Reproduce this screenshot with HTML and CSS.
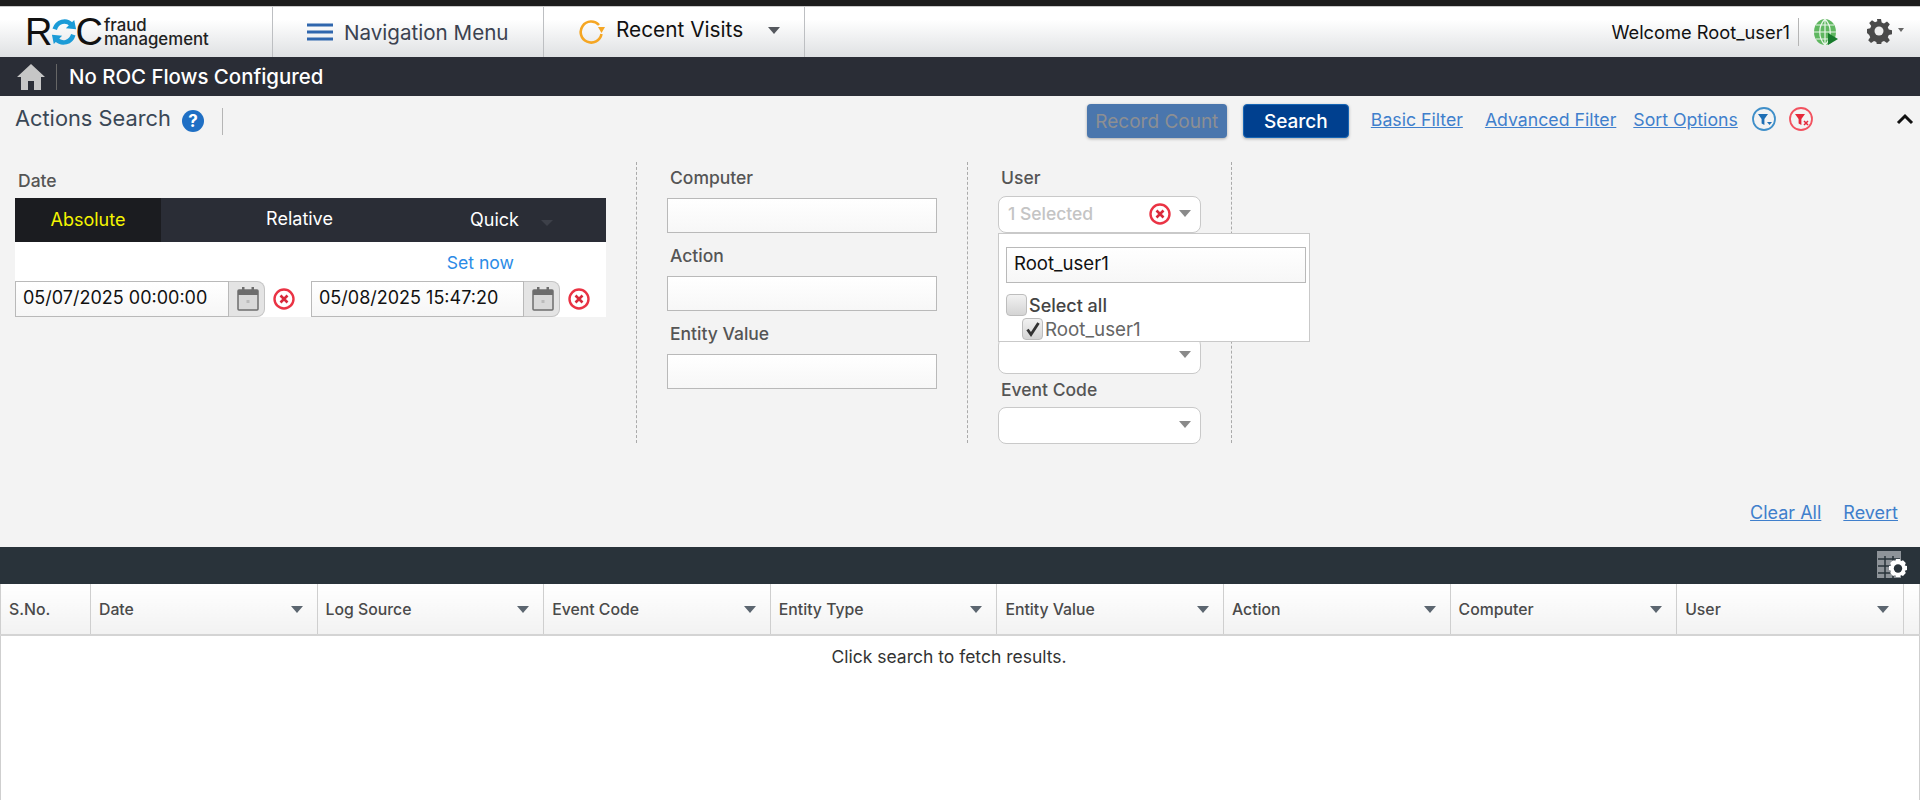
FILE: index.html
```html
<!doctype html>
<html>
<head>
<meta charset="utf-8">
<title>Actions Search</title>
<link rel="stylesheet" href="styles.css">
</head>
<body>
<svg class="defs" width="0" height="0">
  <symbol id="clear" viewBox="0 0 22 22">
    <circle cx="11" cy="11" r="9.500" fill="#fff" stroke="#ea3344" stroke-width="2.400"/>
    <path d="M7.500 7.500l7 7M14.500 7.500l-7 7" stroke="#d8283a" stroke-width="2.600" fill="none"/>
  </symbol>
  <symbol id="calendar" viewBox="0 0 22 24">
    <rect x="1" y="3" width="20" height="20" rx="1" fill="#d9d9d9" stroke="#6d6d6d" stroke-width="1.500"/>
    <rect x="1" y="3" width="20" height="5" fill="#6d6d6d"/>
    <rect x="5" y="0" width="2.500" height="6" fill="#6d6d6d"/>
    <rect x="14.500" y="0" width="2.500" height="6" fill="#6d6d6d"/>
    <rect x="9.500" y="13" width="3" height="3" fill="#bbb"/>
  </symbol>
</svg>

<div class="topline"></div>
<div class="header">
  <div class="head-cell logo-cell">
    <div class="logo">
      <span class="logo-big">R</span>
      <svg class="logo-o" width="26" height="30" viewBox="0 0 28 30">
        <path d="M4 12A11 12 0 0 1 22 7" fill="none" stroke="#1b9bd7" stroke-width="5"/>
        <path d="M24 18A11 12 0 0 1 6 23" fill="none" stroke="#1b9bd7" stroke-width="5"/>
        <path d="M16 11l11 1-2-10zM12 19l-11-1 2 10z" fill="#1b9bd7"/>
      </svg>
      <span class="logo-big">C</span>
      <span class="logo-small">fraud<br>management</span>
    </div>
  </div>
  <div class="head-cell nav-cell">
    <svg width="26" height="18" viewBox="0 0 26 18"><path d="M0 2h26M0 9h26M0 16h26" stroke="#2f66ad" stroke-width="3"/></svg>
    <span>Navigation Menu</span>
  </div>
  <div class="head-cell recent-cell">
    <svg width="26" height="26" viewBox="0 0 26 26">
      <path d="M20 6A10.500 10.500 0 1 0 22.500 15" fill="none" stroke="#f5a623" stroke-width="2.600"/>
      <path d="M19 8h7l-3.500 6z" fill="#f5a623"/>
    </svg>
    <span class="recent-text">Recent Visits</span>
    <i class="caret caret-dark"></i>
  </div>
  <div class="head-right">
    <span class="welcome">Welcome Root_user1</span>
    <svg class="globe" width="26" height="28" viewBox="0 0 26 28">
      <ellipse cx="12" cy="14" rx="11" ry="13" fill="#5fb760"/>
      <path d="M1 14h22M3 7h18M3 21h18M12 1v26M12 1C5 8 5 20 12 27M12 1c7 7 7 19 0 26" fill="none" stroke="#e9f5e9" stroke-width="1.200"/>
      <path d="M15 15l10 6-10 6z" fill="#177a2c"/>
    </svg>
    <svg class="gear" width="26" height="26" viewBox="0 0 26 26">
      <path d="M11 1h4l.7 3.500 2.300 1 3-2 2.800 2.800-2 3 1 2.300 3.200.7v4l-3.200.7-1 2.300 2 3-2.800 2.800-3-2-2.300 1-.7 2.900h-4l-.7-2.900-2.300-1-3 2-2.800-2.800 2-3-1-2.300L1 15v-4l3.200-.7 1-2.300-2-3L6 2.200l3 2 2.300-1z" fill="#4a4a4a"/>
      <circle cx="13" cy="13" r="4.500" fill="#eee"/>
    </svg>
    <i class="caret caret-tiny"></i>
  </div>
</div>

<div class="flowbar">
  <svg class="home" width="28" height="26" viewBox="0 0 28 26"><path d="M14 0L0 13h4v13h7v-9h6v9h7V13h4z" fill="#c6c6c6"/></svg>
  <span class="flow-text">No ROC Flows Configured</span>
</div>

<div class="search-panel">
  <div class="toolbar">
    <span class="page-title">Actions Search</span>
    <svg class="help" width="24" height="24" viewBox="0 0 24 24">
      <circle cx="12" cy="12" r="11" fill="#1f6fc4"/>
      <text x="12" y="18" text-anchor="middle" class="help-mark">?</text>
    </svg>
    <div class="title-sep"></div>
    <div class="tool-right">
      <button class="btn btn-count">Record Count</button>
      <button class="btn btn-search">Search</button>
      <a class="link link-basic">Basic Filter</a>
      <a class="link link-adv">Advanced Filter</a>
      <a class="link link-sort">Sort Options</a>
      <svg class="filter-a" width="26" height="26" viewBox="0 0 26 26">
        <circle cx="13" cy="13" r="11" fill="#f3f3f3" stroke="#3f8fc9" stroke-width="1.800"/>
        <path d="M7 8h10l-3.600 5v6l-2.800-1.500V13z" fill="#1f6fb5"/>
        <path d="M16 16h5l-2.500 3z" fill="#1f6fb5"/>
      </svg>
      <svg class="filter-b" width="26" height="26" viewBox="0 0 26 26">
        <circle cx="13" cy="13" r="11" fill="#f3f3f3" stroke="#f2525f" stroke-width="1.800"/>
        <path d="M7 8h10l-3.600 5v6l-2.800-1.500V13z" fill="#e5283a"/>
        <path d="M16 15l4 4M20 15l-4 4" stroke="#e5283a" stroke-width="1.500"/>
      </svg>
      <svg class="collapse" width="18" height="12" viewBox="0 0 18 12"><path d="M2 10l7-7 7 7" fill="none" stroke="#111" stroke-width="3"/></svg>
    </div>
  </div>

  <div class="filters">
    <div class="col-date">
      <div class="date-label">Date</div>
      <div class="date-box">
        <div class="date-tabs">
          <span class="tab tab-on">Absolute</span>
          <span class="tab tab-relative">Relative</span>
          <span class="tab tab-quick">Quick<i class="caret caret-muted"></i></span>
        </div>
        <div class="set-now">Set now</div>
        <div class="date-row">
          <div class="date-input date-from">05/07/2025 00:00:00</div>
          <div class="cal-btn"><svg width="22" height="24"><use href="#calendar"/></svg></div>
          <svg class="date-clear" width="22" height="22"><use href="#clear"/></svg>
          <div class="date-input date-to">05/08/2025 15:47:20</div>
          <div class="cal-btn"><svg width="22" height="24"><use href="#calendar"/></svg></div>
          <svg class="date-clear" width="22" height="22"><use href="#clear"/></svg>
        </div>
      </div>
    </div>

    <div class="col-mid">
      <div class="field"><label>Computer</label><div class="text-input"></div></div>
      <div class="field"><label>Action</label><div class="text-input"></div></div>
      <div class="field"><label>Entity Value</label><div class="text-input"></div></div>
    </div>

    <div class="col-user">
      <div class="sel-field">
        <label>User</label>
        <div class="select">
          <span class="sel-value">1 Selected</span>
          <svg class="sel-clear" width="22" height="22"><use href="#clear"/></svg>
          <i class="caret caret-grey"></i>
        </div>
      </div>
      <!-- next two rows sit under the open menu -->
      <div class="sel-field"><label></label><div class="select"><i class="caret caret-grey"></i></div></div>
      <div class="sel-field"><label></label><div class="select"><i class="caret caret-grey"></i></div></div>
      <div class="sel-field"><label>Event Code</label><div class="select"><i class="caret caret-grey"></i></div></div>

      <div class="user-menu">
        <div class="menu-search">Root_user1</div>
        <div class="menu-all"><span class="check"></span><span>Select all</span></div>
        <div class="menu-item">
          <span class="check">
            <svg width="16" height="16" viewBox="0 0 16 16"><path d="M2.500 8.500l3.500 5L13.500 2" fill="none" stroke="#333" stroke-width="2.800"/></svg>
          </span>
          <span>Root_user1</span>
        </div>
      </div>
    </div>
  </div>

  <div class="panel-foot">
    <a class="link">Clear All</a>
    <a class="link">Revert</a>
  </div>
</div>

<div class="grid-bar">
  <svg width="30" height="29" viewBox="0 0 30 29">
    <rect x="0" y="0" width="24" height="27" fill="#8e9499"/>
    <path d="M1 8h22M1 15h22M1 22h22M8 5v22M16 5v22" stroke="#29333a" stroke-width="1.500"/>
    <path d="M19 8h4l.7 2.300 2.300-1 2.800 2.800-1 2.300 2.200.7v4l-2.200.7 1 2.300-2.800 2.800-2.300-1-.7 2.100h-4l-.7-2.100-2.300 1-2.800-2.800 1-2.300-2.200-.7v-4l2.200-.7-1-2.300 2.800-2.800 2.300 1z" fill="#fff"/>
    <circle cx="21" cy="17.500" r="4.200" fill="#29333a"/>
  </svg>
</div>

<table class="grid">
  <colgroup>
    <col class="c-sno"><col class="c-a"><col class="c-a"><col class="c-a"><col class="c-a"><col class="c-a"><col class="c-a"><col class="c-a"><col class="c-a"><col>
  </colgroup>
  <thead>
    <tr>
      <th>S.No.</th>
      <th><div class="th-in">Date<i class="caret caret-head"></i></div></th>
      <th><div class="th-in">Log Source<i class="caret caret-head"></i></div></th>
      <th><div class="th-in">Event Code<i class="caret caret-head"></i></div></th>
      <th><div class="th-in">Entity Type<i class="caret caret-head"></i></div></th>
      <th><div class="th-in">Entity Value<i class="caret caret-head"></i></div></th>
      <th><div class="th-in">Action<i class="caret caret-head"></i></div></th>
      <th><div class="th-in">Computer<i class="caret caret-head"></i></div></th>
      <th><div class="th-in">User<i class="caret caret-head"></i></div></th>
      <th></th>
    </tr>
  </thead>
  <tbody>
    <tr><td colspan="10" class="empty">Click search to fetch results.</td></tr>
  </tbody>
</table>
</body>
</html>
```
FILE: styles.css
```css
html {
	overflow: hidden;
}
body {
	margin: 0;
	height: 800px;
	overflow: hidden;
	background: #fff;
	font-family: Inter, "Liberation Sans", sans-serif;
	font-size: 18px;
	color: #333;
}
.defs {
	position: absolute;
}
.topline {
	height: 6px;
	background: #1c1c1c;
	border-bottom: 1px solid #c9c9c9;
}

/* header */
.header {
	display: flex;
	height: 50px;
	background: linear-gradient(#fff, #fff 25%, #dfe1e3);
}
.head-cell {
	display: flex;
	align-items: center;
	box-sizing: border-box;
	border-right: 1px solid #bdbfc2;
}
.logo-cell {
	width: 273px;
	padding-left: 25px;
}
.logo {
	display: flex;
	align-items: center;
	height: 30px;
	color: #111;
}
.logo-big {
	font-family: "Liberation Sans Narrow", "Liberation Sans", sans-serif;
	font-size: 38px;
	line-height: 30px;
}
.logo-o {
	margin: 0 -2px 0 -1px;
}
.logo-small {
	margin-left: 1px;
	font-size: 16.800px;
	font-weight: 500;
	line-height: 14px;
	color: #222;
}
.nav-cell {
	width: 271px;
	padding-left: 34px;
	font-size: 20.600px;
	color: #3b4250;
}
.nav-cell span {
	margin-left: 11px;
}
.recent-cell {
	width: 261px;
	padding-left: 35px;
	font-size: 20.800px;
	color: #111;
}
.recent-text {
	margin: -5px 0 0 11px;
}
.head-right {
	flex: 1;
	display: flex;
	align-items: center;
	justify-content: flex-end;
}
.welcome {
	font-size: 18.300px;
	color: #111;
	padding-right: 8px;
	border-right: 1px solid #b5b5b5;
	line-height: 28px;
}
.globe {
	margin-left: 14px;
}
.gear {
	margin: -3px 0 0 27px;
}
.caret {
	display: inline-block;
	width: 0;
	height: 0;
	border-left: 6px solid transparent;
	border-right: 6px solid transparent;
	border-top: 7px solid #666;
}
.caret-dark {
	margin: -3px 0 0 25px;
	border-top-color: #55585e;
}
.caret-tiny {
	margin: -4px 16px 0 6px;
	border-width: 4px 3px 0;
	border-top-color: #666;
}
.flowbar {
	display: flex;
	align-items: center;
	height: 39px;
	background: #2a2d36;
}
.home {
	margin-left: 17px;
	padding-right: 11px;
	border-right: 1px solid #666;
}
.flow-text {
	margin-left: 12px;
	font-size: 20.400px;
	font-weight: 500;
	color: #fff;
}

/* filter panel */
.search-panel {
	height: 451px;
	background: #f3f3f3;
}
.toolbar {
	display: flex;
	align-items: center;
	height: 52px;
}
.page-title {
	margin: -8px 0 0 15px;
	font-size: 21.800px;
	color: #3a4756;
}
.help {
	margin: -2px 0 0 10px;
}
.help-mark {
	fill: #fff;
	font-size: 17px;
	font-weight: 700;
}
.title-sep {
	width: 1px;
	height: 27px;
	margin: -2px 0 0 17px;
	background: #b5b5b5;
}
.tool-right {
	flex: 1;
	display: flex;
	align-items: center;
	margin-top: -2px;
	padding-left: 864px;
}
.btn {
	height: 34px;
	padding: 0;
	border: 1px solid transparent;
	border-radius: 4px;
	font: inherit;
	font-size: 19px;
	box-shadow: 0 1px 3px #aaa;
}
.btn-count {
	width: 140px;
	background: #4a76ad;
	color: #8d8f93;
}
.btn-search {
	width: 106px;
	margin-left: 16px;
	background: #00408f;
	border-color: #1766b5;
	color: #fff;
	font-weight: 500;
}
.link {
	color: #3f7fcc;
	font-size: 17.700px;
	text-decoration: underline;
}
.tool-right .link, .tool-right svg {
	position: relative;
	top: -2px;
}
.link-basic {
	margin-left: 22px;
}
.link-adv {
	margin-left: 22px;
}
.link-sort {
	margin-left: 17px;
}
.filter-a {
	margin-left: 13px;
}
.filter-b {
	margin-left: 11px;
}
.collapse {
	margin-left: 82px;
}
.filters {
	display: flex;
	height: 281px;
	margin-top: 14px;
}
.col-date {
	width: 591px;
	margin: 0 30px 0 15px;
}
.date-label {
	height: 36px;
	font-size: 17.500px;
	font-weight: 500;
	line-height: 37px;
	padding-left: 3px;
	color: #555;
}
.date-box {
	background: #fff;
}
.date-tabs {
	display: flex;
	height: 44px;
	background: #2a2d36;
	color: #fff;
	line-height: 41px;
}
.tab {
	text-align: center;
}
.tab-on {
	width: 146px;
	background: #1b1c20;
	color: #f4f400;
	line-height: 43px;
}
.tab-relative {
	width: 277px;
}
.tab-quick {
	line-height: 43px;
	padding-left: 32px;
}
.caret-muted {
	margin-left: 22px;
	border-top-color: #3d4049;
	border-width: 6px 6px 0;
}
.set-now {
	height: 39px;
	padding-right: 92px;
	text-align: right;
	line-height: 41px;
	font-size: 17.600px;
	color: #2b8be6;
}
.date-row {
	display: flex;
	align-items: center;
	height: 36px;
}
.date-input {
	box-sizing: border-box;
	height: 36px;
	padding-left: 7px;
	background: linear-gradient(#fff, #f6f6f6);
	border: 1px solid #b9b9b9;
	color: #111;
	line-height: 32px;
}
.date-from {
	width: 214px;
}
.date-to {
	width: 213px;
	margin-left: 16px;
}
.cal-btn {
	display: flex;
	align-items: center;
	justify-content: center;
	box-sizing: border-box;
	width: 36px;
	height: 36px;
	padding-left: 3px;
	background: #e4e4e4;
	border: 1px solid #c4c4c4;
	border-left: 0;
	border-radius: 0 8px 8px 0;
}
.date-clear {
	margin-left: 8px;
}
.col-mid {
	box-sizing: border-box;
	width: 331px;
	padding-left: 30px;
	border-left: 1px dashed #aaa;
}
.field {
	margin-bottom: 7px;
}
.field label, .sel-field label {
	display: block;
	padding-left: 3px;
	font-size: 17.500px;
	font-weight: 500;
	color: #555;
	line-height: 31px;
}
.field label {
	height: 36px;
}
.text-input {
	box-sizing: border-box;
	width: 270px;
	height: 35px;
	background: linear-gradient(#fff, #f7f7f7);
	border: 1px solid #b9b9b9;
}
.col-user {
	position: relative;
	box-sizing: border-box;
	width: 265px;
	padding-left: 30px;
	border-left: 1px dashed #aaa;
	border-right: 1px dashed #aaa;
}
.sel-field label {
	height: 33.500px;
}
.select {
	display: flex;
	align-items: center;
	box-sizing: border-box;
	width: 203px;
	height: 37px;
	padding: 0 9px;
	background: #fff;
	border: 1px solid #c9c9c9;
	border-radius: 8px;
}
.select .caret {
	margin: -2px 0 0 auto;
	border-top-color: #8a8a8a;
}
.sel-value {
	font-size: 17.500px;
	color: #c4c4c4;
	font-weight: 500;
	margin-top: -2px;
}
.sel-clear {
	margin: 0 0 0 auto;
	position: relative;
	left: -1px;
}
.select .sel-clear + .caret {
	margin-left: 7px;
}
.user-menu {
	position: absolute;
	left: 30px;
	top: 71px;
	box-sizing: border-box;
	width: 312px;
	height: 109px;
	padding: 13px 3px 0 7px;
	background: #fff;
	border: 1px solid #c9c9c9;
}
.menu-search {
	box-sizing: border-box;
	height: 36px;
	padding-left: 7px;
	background: linear-gradient(#fff, #f7f7f7);
	border: 1px solid #b9b9b9;
	font-size: 18.600px;
	line-height: 31px;
	color: #111;
}
.menu-all, .menu-item {
	display: flex;
	align-items: center;
}
.menu-all {
	margin-top: 10px;
	height: 24px;
	font-weight: 500;
	color: #444;
}
.menu-item {
	margin-left: 16px;
	height: 24px;
	font-size: 18.800px;
	color: #666;
}
.check {
	display: flex;
	align-items: center;
	justify-content: center;
	width: 21px;
	height: 22px;
	margin-right: 2px;
	background: linear-gradient(#f2f2f2, #d4d4d4);
	border: 1px solid #bdbdbd;
	box-sizing: border-box;
	border-radius: 4px;
}
.panel-foot {
	display: flex;
	justify-content: flex-end;
	gap: 22px;
	padding: 59px 22px 0 0;
	line-height: 22px;
}
.panel-foot .link {
	font-size: 18px;
}

/* results */
.grid-bar {
	display: flex;
	justify-content: flex-end;
	align-items: center;
	height: 37px;
	padding-right: 13px;
	background: #29333a;
}
.grid {
	width: 1920px;
	table-layout: fixed;
	border-collapse: collapse;
	background: #fff;
}
.c-sno {
	width: 90px;
}
.c-a {
	width: 226.600px;
}
.grid th {
	box-sizing: border-box;
	height: 51px;
	padding: 0 14px 0 8px;
	background: linear-gradient(#fff, #f2f2f2);
	border-right: 1px solid #cfcfcf;
	border-bottom: 2px solid #d4d4d4;
	text-align: left;
	font-size: 15.800px;
	font-weight: 500;
	color: #4a4a4a;
}
.grid th:first-child {
	border-left: 1px solid #cfcfcf;
}
.th-in {
	display: flex;
	align-items: center;
	justify-content: space-between;
}
.caret-head {
	border-top-color: #5c6670;
	border-width: 7px 6px 0;
}
.empty {
	height: 163px;
	padding: 10px 22px 0 0;
	text-align: center;
	vertical-align: top;
	font-size: 17.500px;
	color: #333;
	border-left: 1px solid #cfcfcf;
	border-right: 1px solid #cfcfcf;
}
```
